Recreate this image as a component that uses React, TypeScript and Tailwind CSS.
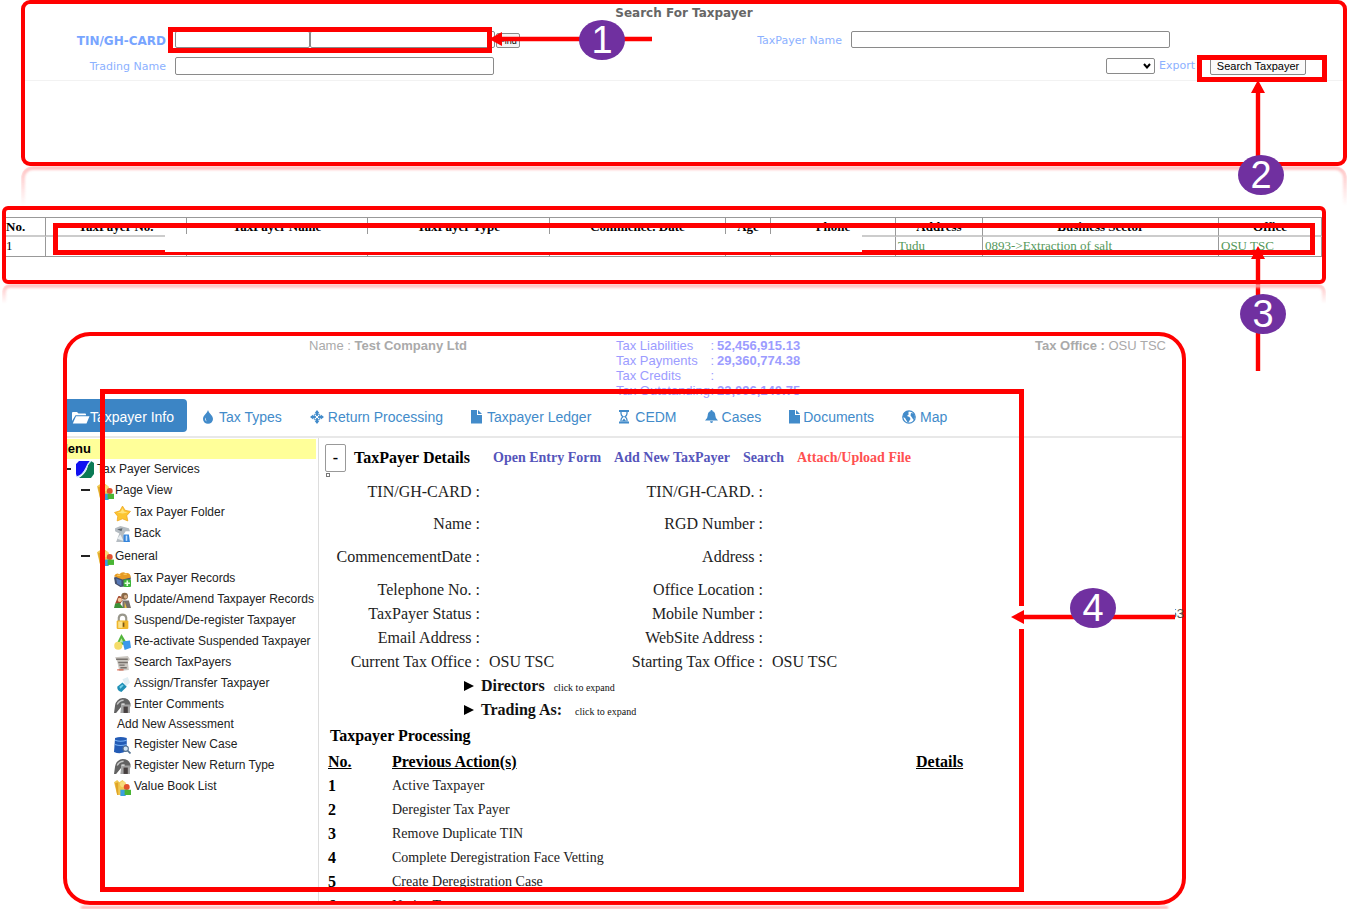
import type { ReactNode } from "react";

const sans = "font-['Liberation_Sans',Arial,sans-serif]";
const serif = "font-['Liberation_Serif','Times_New_Roman',serif]";
const verdana = "font-['DejaVu_Sans',Verdana,sans-serif]";

function Badge({ n, className }: { n: number; className: string }) {
  return (
    <span
      className={`absolute flex h-10 w-[46px] items-center justify-center rounded-[50%] bg-[#7030a0] text-[38px] leading-10 text-white ${sans} ${className}`}
    >
      {n}
    </span>
  );
}

function ArrowLeft({ length, className }: { length: number; className: string }) {
  return (
    <svg className={`absolute ${className}`} width={length} height="14" aria-hidden="true">
      <path d={`M0 7 L13 0 V4.800 H${length} V9.200 H13 V14 Z`} fill="#f00" />
    </svg>
  );
}

function ArrowUp({ length, className }: { length: number; className: string }) {
  return (
    <svg className={`absolute ${className}`} width="14" height={length} aria-hidden="true">
      <path d={`M7 0 L14 13 H9.200 V${length} H4.800 V13 H0 Z`} fill="#f00" />
    </svg>
  );
}

const inputBox = "border border-[#8a8a8a] rounded-[2px] bg-white px-1 text-[11px] outline-none";

function SearchPanel() {
  return (
    <section className="relative ml-[21px] mr-[3px] min-h-[166px] rounded-[9px] border-4 border-[#f00]">
      <form className={verdana} onSubmit={(e) => e.preventDefault()}>
        <h1 className="pt-px text-center text-xs font-bold leading-4 text-[#666]">Search For Taxpayer</h1>
        <div className="mt-[10px] flex h-[18px] items-start justify-between pr-[173px] text-[11px] leading-[18px]">
          <div className="flex">
            <label htmlFor="tin" className="mr-[9px] w-[141px] pt-px text-right text-[12px] font-bold text-[#78a5ff]">
              TIN/GH-CARD
            </label>
            <input id="tin" className={`${inputBox} h-[17px] w-[135px]`} />
            <input aria-label="TIN suffix" className={`${inputBox} h-[17px] w-[185px]`} />
            <button className={`ml-px mt-0.5 h-[15px] w-6 rounded-[2px] border border-[#8a8a8a] bg-[#f4f4f4] text-[9px] leading-3 ${sans}`}>
              Find
            </button>
          </div>
          <div className="flex">
            <label htmlFor="tpname" className="mr-[9px] pt-px text-[#8cb1ff]">
              TaxPayer Name
            </label>
            <input id="tpname" className={`${inputBox} h-[17px] w-[319px]`} />
          </div>
        </div>
        <div className="flex h-8 items-start justify-between border-b border-[#f2f2f2] pt-2 pr-[37px] text-[11px] leading-[18px]">
          <div className="flex">
            <label htmlFor="trading" className="mr-[9px] w-[141px] pt-px text-right text-[#8cb1ff]">
              Trading Name
            </label>
            <input id="trading" className={`${inputBox} h-[18px] w-[319px]`} />
          </div>
          <div className="flex items-center">
            <span className="relative flex">
              <select id="export" className={`${inputBox} h-4 w-[49px] appearance-none`} />
              <svg className="pointer-events-none absolute right-1 top-[5px]" width="8" height="6" aria-hidden="true">
                <path d="M1 1 L4 4.500 L7 1" fill="none" stroke="#000" strokeWidth="2" />
              </svg>
            </span>
            <label htmlFor="export" className="ml-1 mr-[15px] text-[#8cb1ff]">
              Export
            </label>
            <button className={`h-[17px] w-24 rounded-[2px] border border-[#8a8a8a] bg-[#fafafa] text-[11px] leading-3 text-black ${sans}`}>
              Search Taxpayer
            </button>
          </div>
        </div>
      </form>
      <div className="pointer-events-none absolute left-[143px] top-[23px] h-[26px] w-[324px] border-[5px] border-[#f00]" />
      <div className="pointer-events-none absolute right-[16px] top-[51px] h-[27px] w-[130px] border-[5px] border-[#f00]" />
      <ArrowLeft length={163} className="left-[464px] top-[28px]" />
      <Badge n={1} className="left-[554px] top-[16px]" />
      <ArrowUp length={90} className="right-[78px] top-[76px]" />
      <Badge n={2} className="right-[59px] top-[151px] z-10" />
    </section>
  );
}

const columns: [string, string][] = [
  ["No.", "w-[40px]"],
  ["TaxPayer No.", "w-[141px]"],
  ["TaxPayer Name", "w-[181px]"],
  ["TaxPayer Type", "w-[182px]"],
  ["Commence. Date", "w-[176px]"],
  ["Age", "w-[45px]"],
  ["Phone", "w-[125px]"],
  ["Address", "w-[87px]"],
  ["Business Sector", "w-[236px]"],
  ["Office", ""],
];
const record = ["1", "", "", "", "", "", "", "Tudu", "0893->Extraction of salt", "OSU TSC"];

function ResultsPanel() {
  return (
    <section className="relative ml-[2px] mr-6 min-h-[78px] rounded-[6px] border-4 border-[#f00] pt-[7px]">
      <table className={`w-full table-fixed border-separate border-spacing-0 border-t border-[#999] text-[13px] ${serif}`}>
        <thead>
          <tr>
            {columns.map(([name, width], i) => (
              <th
                key={name}
                className={`h-[19px] whitespace-nowrap border-b-2 border-r border-b-[#ccc] border-r-[#999] p-0 leading-4 text-black ${width} ${i === 0 ? "text-left" : "text-center"}`}
              >
                {name}
              </th>
            ))}
          </tr>
        </thead>
        <tbody>
          <tr>
            {record.map((v, i) => (
              <td
                key={i}
                className={`h-5 border-b border-r border-[#999] p-0 align-top leading-[18px] ${i === 0 ? "text-black" : "pl-0.5 text-[#55985a]"}`}
              >
                {v}
              </td>
            ))}
          </tr>
        </tbody>
      </table>
      <div className="pointer-events-none absolute left-[47px] right-[7px] top-[13px] h-[32px] border-[5px] border-[#f00]" />
      <div className="absolute left-[159px] right-[460px] top-[24px] h-[18px] bg-white" />
      <ArrowUp length={125} className="right-[57px] top-[36px]" />
      <Badge n={3} className="right-[36px] top-[84px] z-10" />
    </section>
  );
}

/* ---------- tab icons ---------- */

const Glyph = ({ children, w = 14 }: { children: ReactNode; w?: number }) => (
  <svg width={w} height="14" viewBox={`0 0 ${w} 14`} fill="currentColor" aria-hidden="true" className="mb-0.5 shrink-0">
    {children}
  </svg>
);

const FileGlyph = () => (
  <Glyph w={12}>
    <path d="M0 0 H6 V5 H11 V13.500 H0 Z M7 0 L11 4 H7 Z" />
  </Glyph>
);

const tabs: { label: string; gap: string; icon: ReactNode }[] = [
  {
    label: "Tax Types",
    gap: "gap-1",
    icon: (
      <Glyph>
        <path d="M7 0 C8 3.500 12 5.500 12 9 A5 4.800 0 0 1 2 9 C2 5.500 6 3.500 7 0 Z" />
        <path d="M4.500 7.500 Q3.200 10 5.800 11.600 Q4.600 9.500 4.500 7.500Z" fill="#fff" />
      </Glyph>
    ),
  },
  {
    label: "Return Processing",
    gap: "gap-1",
    icon: (
      <Glyph>
        <path d="M7 0 L9.500 3.200 H8 V6 H10.800 V4.500 L14 7 L10.800 9.500 V8 H8 V10.800 H9.500 L7 14 L4.500 10.800 H6 V8 H3.200 V9.500 L0 7 L3.200 4.500 V6 H6 V3.200 H4.500 Z" />
        <circle cx="7" cy="7" r="3.300" fill="none" stroke="currentColor" />
        <circle cx="7" cy="7" r="1.300" fill="#fff" />
      </Glyph>
    ),
  },
  { label: "Taxpayer Ledger", gap: "gap-1", icon: <FileGlyph /> },
  {
    label: "CEDM",
    gap: "gap-1.5",
    icon: (
      <Glyph w={10}>
        <path d="M0 0 H10 V2 H0 Z M0 11.500 H10 V13.500 H0 Z" />
        <path d="M2 2 V3.500 Q2 5.500 4 6.800 Q2 8 2 10 V11.500 M8 2 V3.500 Q8 5.500 6 6.800 Q8 8 8 10 V11.500" fill="none" stroke="currentColor" strokeWidth="1.300" />
        <path d="M5 8.500 L7.500 11.500 H2.500 Z" />
      </Glyph>
    ),
  },
  {
    label: "Cases",
    gap: "gap-1",
    icon: (
      <Glyph w={13}>
        <path d="M6.500 0 Q7.600 0 7.600 1.300 Q10.300 2.200 10.300 5.500 Q10.300 8.500 13 10.500 H0 Q2.700 8.500 2.700 5.500 Q2.700 2.200 5.400 1.300 Q5.400 0 6.500 0 Z M5 11.300 H8 Q8 13 6.500 13 Q5 13 5 11.300 Z" />
      </Glyph>
    ),
  },
  { label: "Documents", gap: "gap-0.5", icon: <FileGlyph /> },
  {
    label: "Map",
    gap: "gap-1",
    icon: (
      <Glyph>
        <circle cx="7" cy="7" r="6.200" fill="#fff" stroke="currentColor" strokeWidth="1.300" />
        <path d="M1.500 3.500 L4.500 1 L7.500 1.500 L6 3 L7 4 L5 6 L7.500 7 L8.500 9 L6 13 L4.500 10.500 L3 8 L1 7 Z M9 3 L12 3.500 L13 7 L11.500 10 L10 7.500 L8.500 5.500 Z" />
      </Glyph>
    ),
  },
];

/* ---------- tree icons ---------- */

const Pic = ({ children }: { children: ReactNode }) => (
  <svg width="17" height="17" viewBox="0 0 16 16" aria-hidden="true" className="mt-[3px] shrink-0">
    {children}
  </svg>
);

const pics = {
  logo: (
    <svg width="18" height="17" viewBox="0 0 18 17" aria-hidden="true" className="shrink-0">
      <path d="M3 0 H14 L9 8 Q6 14 1 16 L0 13 V3 Z" fill="#1010f0" />
      <path d="M15 0 L18 2 V13 L15 17 H3 Q9 13 11 8 Q12 3 15 0 Z" fill="#0b7a55" />
      <path d="M15 0 Q11 3 10 8 Q7 14 1 16" fill="none" stroke="#cfe6ff" strokeWidth="1.500" />
    </svg>
  ),
  books: (
    <Pic>
      <path d="M0 3 L3 1 L5 3 L8 1 L11 4 L11 15 L3 15 Z" fill="#f0c850" />
      <path d="M1 4 L4 3 V15 H3 Z" fill="#e0a428" />
      <circle cx="8.500" cy="5" r="2.800" fill="#f8dc7c" />
      <circle cx="12" cy="7.500" r="2.800" fill="#e2502c" />
      <path d="M6 10 H11 V16 H6 Z" fill="#3c9fe0" />
      <path d="M10 10 H16 V15 H10 Z" fill="#49b534" />
    </Pic>
  ),
  star: (
    <Pic>
      <path d="M8 1 L10.500 5 L15.500 6 L12 10 L13 15 L8 13 L3 15 L3.500 10.500 L0.500 7 L5.500 5.500 Z" fill="#fcc532" stroke="#eda51e" strokeWidth="0.700" />
      <path d="M8 3 L9.500 6 L13 7 L8 8 L3 7 L6.500 6 Z" fill="#ffe27a" />
    </Pic>
  ),
  back: (
    <Pic>
      <path d="M1 2 L6 0 L14 2 L15 5 L11 5 L9 8 L11 15 H2 L5 7 L1 5 Z" fill="#b5bcc2" />
      <path d="M3 3 L8 2 L7 5 Z" fill="#5b646c" />
      <path d="M3 12 L6 8 L9 14 Z" fill="#e8edf0" />
      <path d="M9 8 H14 L15 15 H9 Z" fill="#3585dc" />
      <path d="M11 9 H12.500 V14 H11 Z" fill="#c5e2ff" />
    </Pic>
  ),
  basket: (
    <Pic>
      <path d="M0 6 L8 4 L16 6 L14 14 L6 15 L1 12 Z" fill="#45506c" />
      <path d="M0 5 Q2 1 5 3 Q8 0 11 2 Q15 1 16 6 L8 8 Z" fill="#e69a24" />
      <path d="M3 4 H6 M9 3 H12" stroke="#ffd468" />
      <path d="M2 7 L7 9 V14 L3 12 Z" fill="#5677b5" />
      <rect x="9" y="8" width="7" height="7" rx="1" fill="#3eb53a" />
      <path d="M12.500 9 V14 M10 11.500 H15" stroke="#e8ffe0" strokeWidth="1.500" />
    </Pic>
  ),
  people: (
    <Pic>
      <circle cx="10" cy="4" r="3.200" fill="#8a6a48" />
      <circle cx="11" cy="4.500" r="1.700" fill="#d9b08a" />
      <path d="M8 8 H14 L16 15 H8 Z" fill="#77706c" />
      <path d="M4 4 Q7 3 8 8 L6 11 H1 Z" fill="#a4482c" />
      <circle cx="5.500" cy="7.500" r="2" fill="#f3c79c" />
      <path d="M1 11 L5 10 L9 15 H0 Z" fill="#3d9138" />
      <path d="M10 9 L12 15 H10 Z" fill="#efc648" />
    </Pic>
  ),
  lock: (
    <Pic>
      <path d="M4.500 8 V4.500 Q5 1.500 8 1.500 Q11 1.500 11.500 4.500 V8" fill="none" stroke="#99978c" strokeWidth="2" />
      <rect x="2.500" y="7" width="11" height="8" rx="1" fill="#f0b62a" />
      <path d="M4 8 H8 V14 H4 Z" fill="#fbe28c" />
      <path d="M9 9 V13" stroke="#74551b" strokeWidth="1.500" />
    </Pic>
  ),
  shapes: (
    <Pic>
      <path d="M7 0 L13 10 H2 Z" fill="#53b53c" />
      <path d="M7 4 L9 8 H5 Z" fill="#c2ec9d" />
      <circle cx="4" cy="11" r="3.800" fill="#f5dc6a" />
      <path d="M8 7 L15 6 L16 13 L10 15 Z" fill="#3b98ec" />
    </Pic>
  ),
  papers: (
    <Pic>
      <path d="M1 2 L13 1 L15 4 L13 6 L14 14 L5 15 L3 6 Z" fill="#cbc7c1" />
      <path d="M2 4 H13 M4 7 H13 M5 9.500 H10 M6 12 H12" stroke="#77716c" strokeWidth="1.300" />
      <path d="M3 14 H9" stroke="#d8553b" />
    </Pic>
  ),
  pen: (
    <Pic>
      <path d="M8 3 L13 1 L15 6 L11 10 Z" fill="#e2eef3" />
      <path d="M3 10 L8 6 L12 10 L7 15 Q3 14 3 10 Z" fill="#1f8fb5" />
      <path d="M5 10 L8 8 L9 9 L6 12 Z" fill="#75d2ec" />
    </Pic>
  ),
  phone: (
    <Pic>
      <path d="M1 8 Q2 2 8 1 Q14 1 15.500 6 V9 H10 V6 H7 V9 L2 15 H0 Z" fill="#626262" />
      <path d="M7 7 H15 V15 H6 Z" fill="#a2a2a2" />
      <path d="M9 9 H13 V15 H9 Z" fill="#463f3f" />
      <path d="M3 7 Q5 3 9 3" stroke="#c6c6c6" strokeWidth="1.300" fill="none" />
    </Pic>
  ),
  database: (
    <Pic>
      <path d="M1 1 Q6 -1 12 1 V13 Q6 17 0 14 Z" fill="#235bb5" />
      <path d="M1 3 Q6 5 12 3 M1 7 Q6 9 12 7" stroke="#78b2f5" fill="none" />
      <circle cx="11" cy="11" r="2.500" fill="#cfe3f5" stroke="#53708f" />
      <path d="M13 13 L15.500 15.500" stroke="#53708f" strokeWidth="1.500" />
    </Pic>
  ),
};

const leaves: { label: string; icon?: ReactNode }[] = [
  { label: "Tax Payer Records", icon: pics.basket },
  { label: "Update/Amend Taxpayer Records", icon: pics.people },
  { label: "Suspend/De-register Taxpayer", icon: pics.lock },
  { label: "Re-activate Suspended Taxpayer", icon: pics.shapes },
  { label: "Search TaxPayers", icon: pics.papers },
  { label: "Assign/Transfer Taxpayer", icon: pics.pen },
  { label: "Enter Comments", icon: pics.phone },
  { label: "Add New Assessment" },
  { label: "Register New Case", icon: pics.database },
  { label: "Register New Return Type", icon: pics.phone },
  { label: "Value Book List", icon: pics.books },
];

const Minus = () => <span className="h-[2px] w-[9px] shrink-0 bg-[#222]" />;

function Leaf({ label, icon }: { label: string; icon?: ReactNode }) {
  return (
    <li className={icon ? "h-[21px]" : "h-[19px]"}>
      <a href="#" className={`flex h-full items-center gap-[3px] ${icon ? "pl-[47px]" : "pl-[50px]"}`}>
        {icon}
        {label}
      </a>
    </li>
  );
}

function Branch({ label }: { label: string }) {
  return (
    <div className="flex h-[22px] items-center pl-[14px]">
      <Minus />
      <span className="ml-[7px] mr-px">{pics.books}</span>
      {label}
    </div>
  );
}

function Sidebar() {
  return (
    <nav className={`w-[252px] shrink-0 border-r border-[#ddd] text-[12px] leading-4 text-[#222] ${sans}`}>
      <h2 className="mr-[2px] mt-px h-5 bg-[#ffff99] text-[13px] font-bold leading-5 text-black">
        <span className="-ml-[10px]">Menu</span>
      </h2>
      <div className="-ml-[5px] flex h-5 items-center">
        <Minus />
        <span className="ml-[5px] mr-[3px]">{pics.logo}</span>
        Tax Payer Services
      </div>
      <Branch label="Page View" />
      <ul className="pb-0.5">
        <Leaf label="Tax Payer Folder" icon={pics.star} />
        <Leaf label="Back" icon={pics.back} />
      </ul>
      <Branch label="General" />
      <ul>
        {leaves.map((l) => (
          <Leaf key={l.label} {...l} />
        ))}
      </ul>
    </nav>
  );
}

const details: [string, string, string, string, string][] = [
  ["h-7", "TIN/GH-CARD", "", "TIN/GH-CARD.", ""],
  ["h-8", "Name", "", "RGD Number", ""],
  ["h-[33px]", "CommencementDate", "", "Address", ""],
  ["h-[33px]", "Telephone No.", "", "Office Location", ""],
  ["h-6", "TaxPayer Status", "", "Mobile Number", ""],
  ["h-6", "Email Address", "", "WebSite Address", ""],
  ["h-6", "Current Tax Office", "OSU TSC", "Starting Tax Office", "OSU TSC"],
];

const actions = [
  "Active Taxpayer",
  "Deregister Tax Payer",
  "Remove Duplicate TIN",
  "Complete Deregistration Face Vetting",
  "Create Deregistration Case",
  "Notice Taxpayer",
];

function Expander({ label, gap }: { label: string; gap: string }) {
  return (
    <button className="ml-[145px] flex h-6 items-center text-[#111]">
      <svg width="10" height="10" aria-hidden="true" className="mr-[7px]">
        <path d="M0 0 L10 5 L0 10 Z" fill="#000" />
      </svg>
      <b>{label}</b>
      <span className={`pt-1 text-[10px] ${gap}`}>click to expand</span>
    </button>
  );
}

function Details() {
  return (
    <div className={`min-w-0 grow text-[16px] leading-6 text-[#222] ${serif}`}>
      <div className="flex h-[38px] items-center pl-[6px] pt-[2px]">
        <button aria-label="Collapse" className="h-7 w-[21px] rounded-[2px] border border-[#999] bg-white font-bold leading-6 text-black">
          -
        </button>
        <h2 className="ml-2 mr-[23px] font-bold text-black">TaxPayer Details</h2>
        <div className="flex gap-[13px] text-[14px] font-bold text-[#5555bb]">
          <a href="#">Open Entry Form</a>
          <a href="#">Add New TaxPayer</a>
          <a href="#">Search</a>
          <a href="#" className="text-[#ff5050]">
            Attach/Upload File
          </a>
        </div>
      </div>
      <div className="relative">
        <span className="absolute left-[7px] top-[-3px] size-1 border border-[#777]" />
        <dl>
          {details.map(([h, l, lv, r, rv]) => (
            <div key={l} className={`flex items-end ${h}`}>
              <dt className="w-[161px] text-right">{l} :</dt>
              <dd className="w-[122px] pl-[9px]">{lv}</dd>
              <dt className="w-[161px] whitespace-nowrap text-right">{r} :</dt>
              <dd className="pl-[9px]">{rv}</dd>
            </div>
          ))}
        </dl>
      </div>
      <Expander label="Directors" gap="ml-[9px]" />
      <Expander label="Trading As:" gap="ml-[13px]" />
      <h3 className="ml-[11px] pt-[2px] font-bold text-black">Taxpayer Processing</h3>
      <table className="ml-[9px] mt-[2px] text-left">
        <thead>
          <tr className="h-6 text-black underline">
            <th className="w-[64px] p-0">No.</th>
            <th className="w-[524px] p-0">Previous Action(s)</th>
            <th className="p-0">Details</th>
          </tr>
        </thead>
        <tbody>
          {actions.map((a, i) => (
            <tr key={a} className="h-6">
              <td className="p-0 font-bold text-black">{i + 1}</td>
              <td className="p-0 text-[14px]">{a}</td>
              <td className="p-0" />
            </tr>
          ))}
        </tbody>
      </table>
    </div>
  );
}

const totals = [
  ["Tax Liabilities", "52,456,915.13"],
  ["Tax Payments", "29,360,774.38"],
  ["Tax Credits", ""],
  ["Tax Outstanding", "23,096,140.75"],
];

function TaxpayerPanel() {
  return (
    <section className="relative ml-[63px] mr-[164px] mt-7">
      <div className="h-[573px] overflow-hidden rounded-[27px] border-4 border-[#f00]">
        <header className={`flex h-[63px] pl-[242px] pr-4 pt-[2px] text-[13px] leading-[15px] text-[#aaa] ${sans}`}>
          <p className="w-[307px]">
            Name : <b>Test Company Ltd</b>
          </p>
          <dl className="text-[#9c9cff]">
            {totals.map(([k, v]) => (
              <div key={k} className="flex gap-[3px]">
                <dt className="flex w-[98px] justify-between">
                  {k}
                  <span>:</span>
                </dt>
                <dd className="font-bold">{v}</dd>
              </div>
            ))}
          </dl>
          <p className="ml-auto">
            <b>Tax Office :</b> OSU TSC
          </p>
        </header>
        <nav className={`flex h-[39px] border-b-2 border-[#e8e8e8] text-[14px] text-[#428bca] ${sans}`}>
          <a href="#" className="flex h-[33px] items-center rounded-r-[4px] bg-[#3c85c5] pl-1 pr-[13px] pt-1 text-white">
            <svg width="19" height="13" viewBox="0 0 19 13" fill="currentColor" aria-hidden="true">
              <path d="M1 10 V2 Q1 1 2 1 H6 L7.500 2.500 H14 Q15 2.500 15 3.500 V4.300 H4.500 Z M5 5.300 H18.500 L15.500 12.500 H1.800 Z" />
            </svg>
            Taxpayer Info
          </a>
          {tabs.map((t) => (
            <a key={t.label} href="#" className={`flex h-[33px] items-center px-[14px] pt-1 ${t.gap}`}>
              {t.icon}
              {t.label}
            </a>
          ))}
        </nav>
        <div className="flex min-h-[500px]">
          <Sidebar />
          <Details />
        </div>
      </div>
      <span className={`absolute right-[2px] top-[274px] flex w-[9px] justify-end overflow-hidden text-[13px] leading-4 text-[#555] ${sans}`}>53</span>
      <div className="pointer-events-none absolute bottom-[13px] left-[37px] right-[162px] top-[57px] border-[5px] border-[#f00]" />
      <div className="absolute right-[160px] top-[274px] h-[23px] w-[14px] bg-white" />
      <ArrowLeft length={164} className="right-[11px] top-[278px]" />
      <Badge n={4} className="right-[70px] top-[256px]" />
    </section>
  );
}

export default function App() {
  return (
    <main className="min-h-screen overflow-hidden bg-white">
      <SearchPanel />
      <div className="ml-[21px] mr-[3px] h-10 rounded-t-[12px] border-4 border-b-0 border-[#ffb8b8] opacity-90 blur-[1px] [mask-image:linear-gradient(black,transparent)]" />
      <ResultsPanel />
      <div className="ml-[2px] mr-6 h-5 rounded-t-[8px] border-4 border-b-0 border-[#ffb8b8] opacity-90 blur-[1px] [mask-image:linear-gradient(black,transparent)]" />
      <TaxpayerPanel />
      <div className="ml-[63px] mr-[164px] h-1 px-[18px]">
        <div className="mt-px h-[3px] bg-[#ffb8b8] blur-[1px]" />
      </div>
    </main>
  );
}
